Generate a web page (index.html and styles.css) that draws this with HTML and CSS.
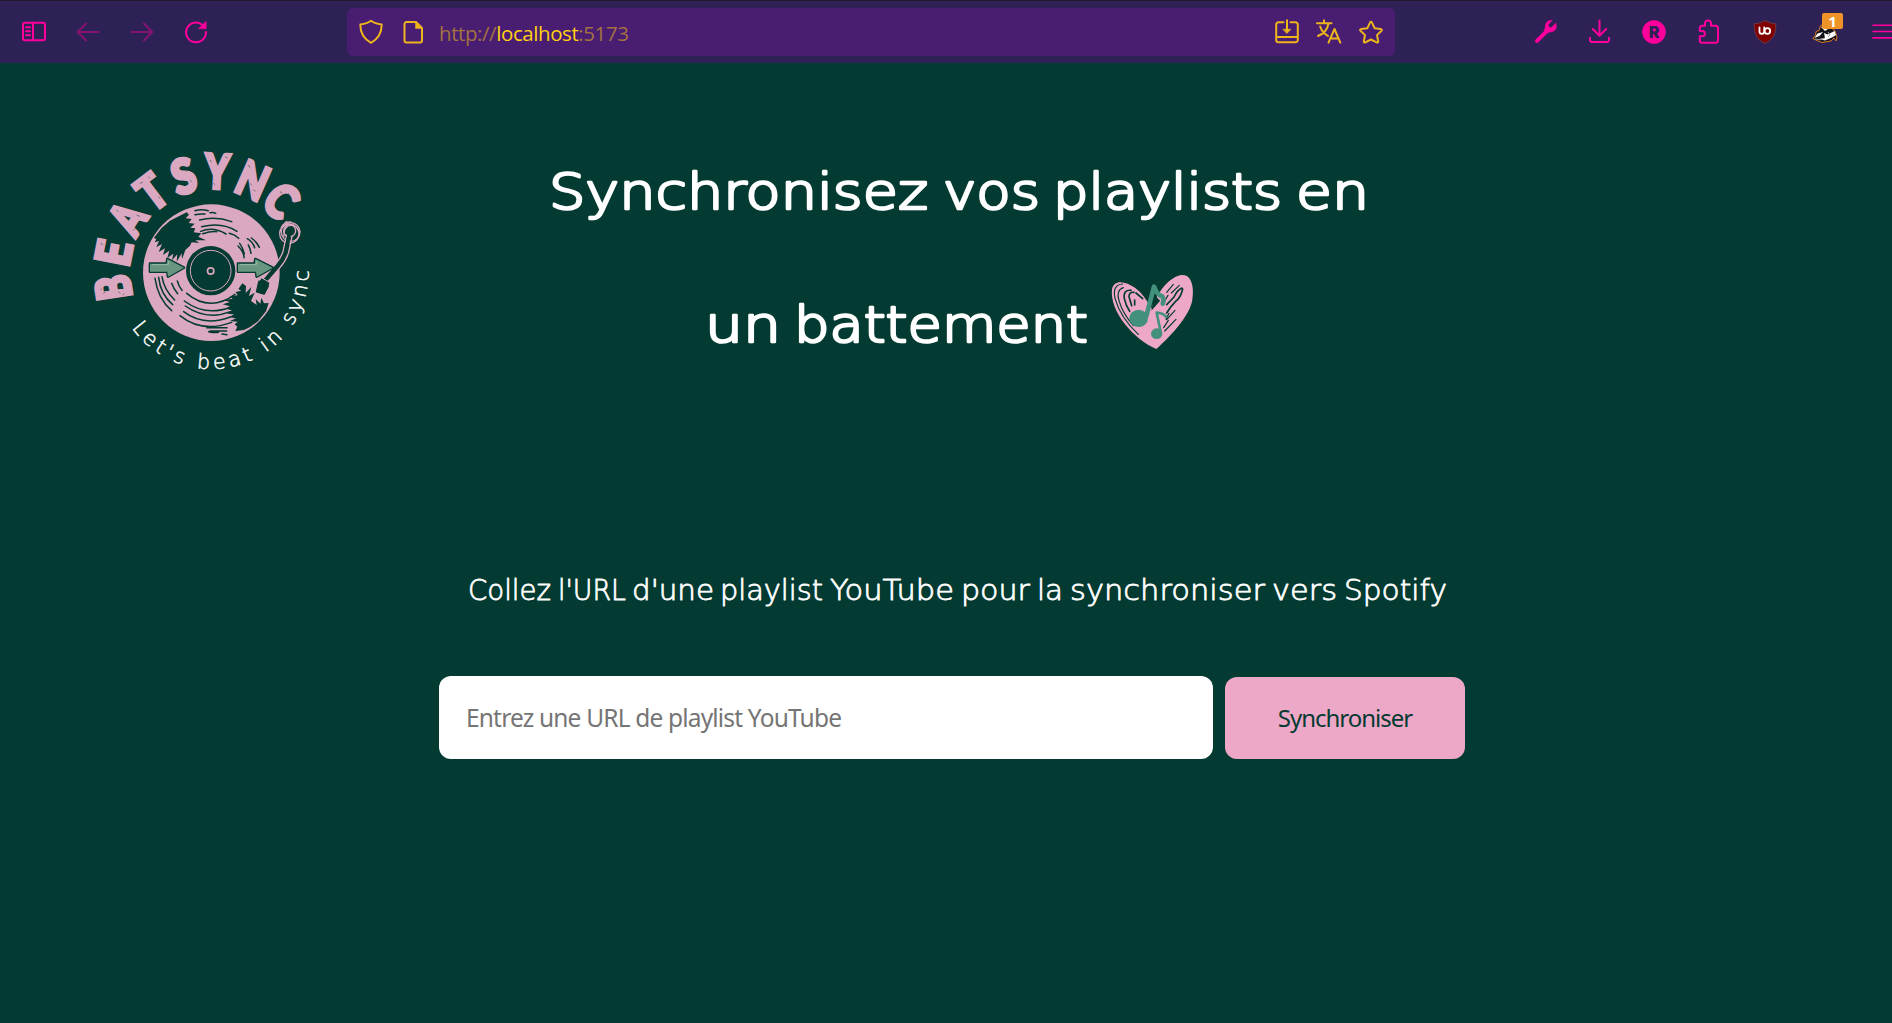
FILE: index.html
```html
<!DOCTYPE html>
<html lang="fr">
<head>
<meta charset="utf-8">
<title>BeatSync</title>
<link rel="stylesheet" href="styles.css">
</head>
<body>
<nav class="toolbar">
  <svg class="icon" viewBox="0 0 24 24"><rect x="1" y="1.800" width="22" height="17.400" rx="2"/><path d="M11 2v17M4 6.200h4M4 10.200h4M4 14.200h4"/></svg>
  <svg class="icon dim" viewBox="0 0 24 24"><path d="M22.500 11H2M10 2.500L1.800 11l8.200 8.500"/></svg>
  <svg class="icon dim" viewBox="0 0 24 24"><path d="M1.500 11H22M14 2.500l8.200 8.500-8.200 8.500"/></svg>
  <svg class="icon" viewBox="0 0 24 24"><path d="M18.500 3.900A9.900 9.900 0 1 0 21.900 11"/><path class="solid" d="M22.200.5v7.200h-7.600z"/></svg>
  <div class="urlbar">
    <svg class="icon" viewBox="0 0 24 24"><path d="M12 .8C9 3 5 4 1.300 4.600c0 8.500 3.700 14.500 10.700 18.200 7-3.700 10.700-9.700 10.700-18.200C19 4 15 3 12 .8z"/></svg>
    <svg class="icon" viewBox="0 0 24 24"><path d="M5.500 2h9.500l6 6v12.500a2 2 0 0 1-2 2H5.500a2 2 0 0 1-2-2V4a2 2 0 0 1 2-2z"/><path class="solid" d="M14.500 2v6.500H21z"/></svg>
    <span class="url">http://<b>localhost</b>:5173</span>
    <svg class="icon" viewBox="0 0 24 24"><path d="M8.500 2.300H3.500a2.300 2.300 0 0 0-2.300 2.300V20a2.300 2.300 0 0 0 2.300 2.300h17a2.300 2.300 0 0 0 2.300-2.300V4.600a2.300 2.300 0 0 0-2.300-2.300h-5M1.500 17h21M12 .3V11"/><path class="solid" d="M8 9.200h8L12 13.400z"/></svg>
    <svg class="icon" viewBox="0 0 24 24"><path d="M0 3.200h14.500M7 .2v3M11.500 3.500C10.500 9.500 6 14 1 16M3.200 6.500c1.200 4 4.300 7.500 7.800 9.500M11.500 22.700L17.500 9l5.800 13.700M13.500 18.500h8"/></svg>
    <svg class="icon" viewBox="0 0 24 24"><path d="M12 1.800c.5 0 .8.300 1 .8l2.600 5.600 6.200.8c1 .1 1.400 1.100.7 1.800L18 15.100l1.200 6.200c.2 1-.7 1.600-1.600 1.100L12 19.500l-5.600 2.900c-.9.500-1.800-.1-1.600-1.100L6 15.100 1.500 10.800c-.7-.7-.3-1.700.7-1.800l6.200-.8L11 2.600c.2-.5.500-.8 1-.8z"/></svg>
  </div>
  <div class="tools">
    <svg class="icon" viewBox="0 0 24 24"><path class="thick" d="M3 20.800L13.500 10.300"/><path class="solid" d="M21.800 3.300l-4.400 4.300-2.600-.5-.5-2.700 4-4C14.500-.3 11 2.500 11.300 7.500L10 11l2.300 2.500 3.400-1.500c5 .5 8-3.700 6.100-8.700z"/></svg>
    <svg class="icon" viewBox="0 0 24 24"><path d="M11.500.5v15M4.800 9l6.700 6.700L18.200 9M2 17.800v2a2.300 2.300 0 0 0 2.300 2.300h14.400a2.300 2.300 0 0 0 2.300-2.300v-2"/></svg>
    <svg class="icon" viewBox="0 0 24 24"><circle class="solid" cx="12" cy="12" r="11.600"/><text class="r-mark" x="12" y="17.800">R</text></svg>
    <svg class="icon" viewBox="0 0 24 24"><path d="M6 5.800h3V3.600a3 3 0 0 1 6 0v2.200h4.800A2.200 2.200 0 0 1 22 8v12.600a2.200 2.200 0 0 1-2.200 2.200H6a2.200 2.200 0 0 1-2.200-2.200v-4.300h2.500a2.600 2.600 0 0 0 0-5.200H3.800V8A2.200 2.200 0 0 1 6 5.800z"/></svg>
    <svg class="icon ublock" viewBox="0 0 24 24"><path class="shield" d="M12 .6C9 2.700 5 3.600 1.200 3.700 1 12.500 2.500 18.700 12 23.400c9.500-4.700 11-10.900 10.800-19.700C19 3.600 15 2.700 12 .6z"/><path class="uo" d="M6.500 7.500v4.300q0 2 2.200 2 2.500 0 2.500-2V7.500"/><circle class="uo" cx="14.400" cy="11" r="2.800"/></svg>
    <span class="badger">
      <svg viewBox="0 0 28 24"><path d="M.8 18.500l2.800-3.500L4 11.500l3-1 1.500-5L15 4l8 7 2 6-1 4-2-3-3 3-9 1.500-5-2z" fill="#15131a" stroke="#d97b22" stroke-width="1"/><path d="M9 7l4-2 3 4-3 2zM2.500 18l3-4.500 5.500-1.500-3.500 4zM12 13l3.500 1.500 7-3.500 1.500 4-3 2-8 3.500-6-1.500 6-1z" fill="#fff"/><path d="M3 19l6 .8 4-2M16 12l2 3-2 2" fill="none" stroke="#999"/></svg>
      <span class="badge">1</span>
    </span>
    <svg class="icon menu" viewBox="0 0 24 24"><path d="M0 5.200h24M0 11.500h24M0 17.900h24"/></svg>
  </div>
</nav>

<header class="hero">
  <svg class="logo" viewBox="0 0 720 720" role="img" aria-label="BeatSync">
    <g class="brand">
      <text transform="rotate(-99 396 396) translate(396 147) scale(.76 1)">B</text>
      <text transform="rotate(-79 396 396) translate(396 147) scale(.88 1)">E</text>
      <text transform="rotate(-57.500 396 396) translate(396 147) scale(.76 1)">A</text>
      <text transform="rotate(-37 396 396) translate(396 147) scale(.84 1)">T</text>
      <text transform="rotate(-16.500 396 396) translate(396 147) scale(.88 1)">S</text>
      <text transform="rotate(3 396 396) translate(396 145) scale(.78 1)">Y</text>
      <text transform="rotate(24 396 396) translate(396 147) scale(.8 1)">N</text>
      <text transform="rotate(44 396 396) translate(396 149) scale(.84 1)">C</text>
    </g>
    <g class="wear"><path d="M62 445l4 4M70 460l5-3M115 455l6 5M128 465l5-4M62 310l7 5M80 335l5 4M130 300l5 4M110 210l5 4M170 225l9 4M160 270l6-4M180 130l8-3M235 170l5 6M205 110l5 5M305 125l6 4M315 90l4 5M330 120l5 5M390 60l4 6M435 50l8 4M400 130l5 4M505 75l5 8M520 150l6 3M510 130l5 6M600 155l7 5M625 160l5 9M590 195l5-5"/></g>
    <path id="tag-arc" d="M155 563A292 292 0 0 0 685 372" fill="none"/>
    <text class="tagline" textLength="742"><textPath href="#tag-arc" textLength="742">Let's beat in sync</textPath></text>
    <circle class="vinyl" cx="394" cy="398" r="205"/>
    <path class="shadow" d="M320 217L270 242 244 265 222 293 229 298 224 307 237 303 229 322 246 312 236 336 255 325 249 345 268 332 262 354 280 341 276 361 292 343 290 365 305 340 306 358 316 330 330 317 335 307 358 309 346 301 378 301 355 290 364 280 341 277 346 265 331 263 344 251 326 249 335 237 317 235 327 224z"/>
    <path class="shadow" d="M487 430L475 447 484 452 467 456 473 466 450 469 458 476 430 481 450 486 428 493 450 499 437 506 455 511 442 521 462 523 447 532 468 535 450 543 473 545 464 553 472 560 466 573 492 570 510 561 534 544 558 514 566 489 552 490 544 473 541 491 527 477 530 495 513 483 524 458 507 468 514 441 497 459 498 438z"/>
    <path class="groove" d="M345 212q20-5 40 0M345 224q15-3 30-2M390 218q10-2 17 2M359 240q48-12 96 5M365 260q62-15 106 14M368 281q25-8 42-6M362 274q38-15 76 8M448 280q17 4 28 15M479 310q10 13 14 32M502 296q17 10 22 27M514 294q15 10 24 28M474 318q18 18 18 35M505 315q6 10 8 25M225 415q9 62 50 97M236 412q5 50 42 82M246 410q6 40 38 70M275 430q6 17 18 31M292 423q4 16 14 28M320 460q70 58 145 3M313 483q65 48 140 18M316 498q65 45 135 17M311 515q60 46 140 16M300 527q65 53 155 20M380 563h61M390 573h50M386 575q20 5 30 1M426 582l15 2"/>
    <circle cx="392" cy="392" r="74" fill="#033a31"/>
    <circle class="ring" cx="392" cy="392" r="61"/>
    <circle class="ring hub" cx="392" cy="393" r="9.500"/>
    <path class="arm-edge" d="M628 286L618 334Q611 358 593 378L548 430"/>
    <path class="arm" d="M628 286L618 334Q611 358 593 378L548 430"/>
    <path class="joint" d="M544 413l26 15-5 17-30-17z"/>
    <path class="head" d="M537 424l27 15-12 23-22-7z"/>
    <g class="pivot"><circle cx="628" cy="281" r="29"/><circle cx="632" cy="276" r="28"/><circle cx="629" cy="272" r="18"/><path d="M603 265q10-23 33-18M612 290q-2-35 24-34M650 263l10 12M611 253l10-9"/></g>
    <path d="M628 281L618 332" stroke="#033a31" stroke-width="11"/>
    <g class="arrows"><path d="M210 371h50l2-14 50 26-48 27-2-15h-52z"/><path d="M474 371h50l2-14 52 26-48 27-2-15h-54z"/></g>
    <path d="M216 374h49l2-11M480 374h49l2-11" fill="none" stroke="#9bb8a6" stroke-width="3"/>
  </svg>
  <h1 class="title">
    <svg class="line line-one" viewBox="0 0 860 100"><text y="58.500"><tspan x="19" textLength="379" lengthAdjust="spacingAndGlyphs">Synchronisez</tspan> <tspan x="413" textLength="97" lengthAdjust="spacingAndGlyphs">vos</tspan> <tspan x="523" textLength="229" lengthAdjust="spacingAndGlyphs">playlists</tspan> <tspan x="766" textLength="73" lengthAdjust="spacingAndGlyphs">en</tspan></text></svg>
    <span class="second">
      <svg class="line line-two" viewBox="0 0 550 110"><text y="91.500"><tspan x="175" textLength="76" lengthAdjust="spacingAndGlyphs">un</tspan> <tspan x="264" textLength="294" lengthAdjust="spacingAndGlyphs">battement</tspan></text></svg>
      <svg class="heart" viewBox="0 0 390 300">
        <path d="M229 267C163 240 88 155 96 88 101 57 137 63 166 84q27 20 48 62C230 105 260 56 300 46c36-7 43 38 37 73C330 166 275 225 229 267z" fill="#eea8c7"/>
        <g class="scratches"><path d="M128 72q-32 2-23 43 16 58 70 108M130 83q-23 7-12 42 10 35 42 72"/><path d="M153 91q-24-2-20 25 5 22 16 38M162 97q-15-2-15 13l8 27M164 120v15M168 99l20 17" stroke-width="5"/><path d="M306 84q-15 7-24 27-11 12-22 23M308 87q-5 25-22 38-15 16-26 34" stroke-width="5"/><path d="M280 73l-20 24M298 76l-24 23M264 106l-12 20M285 151l-25 28M267 160l-9 18M288 178l-34 35M265 181l-14 22"/><path d="M224 108L217 146 238 122z" fill="#033a31"/></g>
        <g class="notes"><ellipse cx="176" cy="175" rx="28" ry="26"/><path d="M199 168L222 80Q232 107 246 108 254 119 248 131" stroke-width="14"/><ellipse cx="230" cy="221" rx="17" ry="16"/><path d="M242 216L230 158Q250 159 259 171" stroke-width="8"/></g>
      </svg>
    </span>
  </h1>
</header>

<main class="sync">
  <p class="lead">
    <svg class="lead-line" viewBox="0 0 1050 60"><text y="40"><tspan x="38" textLength="83" lengthAdjust="spacingAndGlyphs">Collez</tspan> <tspan x="128" textLength="68" lengthAdjust="spacingAndGlyphs">l'URL</tspan> <tspan x="202" textLength="82" lengthAdjust="spacingAndGlyphs">d'une</tspan> <tspan x="290" textLength="103" lengthAdjust="spacingAndGlyphs">playlist</tspan> <tspan x="400" textLength="124" lengthAdjust="spacingAndGlyphs">YouTube</tspan> <tspan x="531" textLength="69" lengthAdjust="spacingAndGlyphs">pour</tspan> <tspan x="607" textLength="26" lengthAdjust="spacingAndGlyphs">la</tspan> <tspan x="640" textLength="195" lengthAdjust="spacingAndGlyphs">synchroniser</tspan> <tspan x="842" textLength="65" lengthAdjust="spacingAndGlyphs">vers</tspan> <tspan x="914" textLength="103" lengthAdjust="spacingAndGlyphs">Spotify</tspan></text></svg>
  </p>
  <form class="form">
    <input class="field" type="text" placeholder="Entrez une URL de playlist YouTube">
    <button class="submit" type="button">Synchroniser</button>
  </form>
</main>
</body>
</html>
```
FILE: styles.css
```css
* { box-sizing: border-box; }
body {
  margin: 0;
  height: 1023px;
  overflow: hidden;
  background: #033a31;
  font-family: "Noto Sans", sans-serif;
}
svg { display: block; flex: none; }

/* Browser toolbar */
.toolbar {
  display: flex;
  align-items: center;
  gap: 30px;
  height: 63px;
  padding-left: 22px;
  background: #2e2156;
  border-top: 1px solid #241930;
  color: #ff009d;
}
.icon {
  width: 24px;
  height: 24px;
  overflow: visible;
  fill: none;
  stroke: currentColor;
  stroke-width: 2;
  stroke-linecap: round;
  stroke-linejoin: round;
}
.toolbar > .icon { position: relative; top: 1px; }
.dim { opacity: .42; }
.icon .solid { fill: currentColor; stroke-width: .5; }
.icon .thick { stroke-width: 4; }
.urlbar {
  display: flex;
  align-items: center;
  gap: 18px;
  flex: none;
  width: 1048px;
  height: 48px;
  margin-left: 109px;
  padding: 0 12px;
  background: #491d72;
  border-radius: 6px;
  color: #edb51c;
}
.url {
  flex: 1;
  margin-left: -4px;
  padding-top: 2px;
  font-family: "Open Sans", sans-serif;
  font-size: 20.5px;
  letter-spacing: -.42px;
  color: #a3733f;
  white-space: nowrap;
}
.url b { font-weight: 400; color: #ffd012; }
.tools {
  display: flex;
  align-items: center;
  gap: 30px;
  flex: none;
  margin-left: 109px;
}
.r-mark {
  font: 900 16px Inter, sans-serif;
  text-anchor: middle;
  fill: #2e2156;
  stroke: none;
}
.ublock { margin-left: 3px; }
.icon .shield { fill: #800000; stroke: #6c3848; stroke-width: 1; }
.icon .uo { stroke: #fff; stroke-width: 1.8; }
.badger { position: relative; width: 28px; height: 24px; margin-left: 5px; }
.badger svg { width: 28px; height: 24px; }
.badge {
  position: absolute;
  left: 10px;
  top: -7px;
  width: 21px;
  height: 16px;
  border-radius: 2px;
  background: #ee9328;
  color: #fff;
  font: 700 15px/16px "Noto Sans", sans-serif;
  text-align: center;
}
.menu { margin-left: 3px; stroke-width: 1.6; }

/* Logo and heading */
.hero { display: flex; padding: 77px 0 0 80px; }
.logo { width: 240px; height: 240px; }
.brand {
  font: 900 142px Lato, sans-serif;
  fill: #dba8c1;
  stroke: #dba8c1;
  stroke-width: 11;
  text-anchor: middle;
}
.wear { stroke: #033a31; stroke-width: 2.5; opacity: .6; }
.tagline {
  font: 400 62px "DejaVu Sans", sans-serif;
  font-weight: 200;
  fill: #fff;
  stroke: #fff;
  stroke-width: 1.5;
}
.vinyl { fill: #dba8c1; }
.shadow { fill: #033a31; }
.groove { fill: none; stroke: #033a31; stroke-width: 4.5; stroke-linecap: round; }
.ring { fill: none; stroke: #dba8c1; stroke-width: 3; }
.hub { stroke-width: 5; }
.arm-edge { fill: none; stroke: #dba8c1; stroke-width: 21; }
.arm { fill: none; stroke: #033a31; stroke-width: 13; }
.joint { fill: #033a31; stroke: #dba8c1; stroke-width: 3; }
.head { fill: #033a31; stroke: #033a31; stroke-width: 5; stroke-linejoin: round; }
.pivot { fill: none; stroke: #dba8c1; stroke-width: 4; }
.arrows { fill: #689681; stroke: #033a31; stroke-width: 8; stroke-linejoin: round; paint-order: stroke; }
.title { margin: 10px 0 0 210px; font-weight: 400; }
.line text, .lead-line text {
  font-family: "DejaVu Sans", sans-serif;
  font-weight: 200;
  fill: #fff;
  stroke: #fff;
  stroke-linejoin: round;
}
.line text { font-size: 50px; stroke-width: 2.6; }
.line-one { width: 860px; height: 100px; }
.line-two { width: 550px; height: 110px; overflow: visible; }
.second { display: flex; align-items: flex-end; }
.heart { width: 130px; height: 100px; }
.scratches { fill: none; stroke: #033a31; stroke-width: 3.5; stroke-linecap: round; }
.notes ellipse { fill: #43907d; }
.notes path { fill: none; stroke: #43907d; stroke-linecap: round; stroke-linejoin: round; }

/* Playlist form */
.sync { padding-top: 180px; }
.lead { margin: 0 0 56px 430px; }
.lead-line { width: 1050px; height: 60px; }
.lead-line text { font-size: 28.5px; stroke-width: .8; }
.form { display: flex; align-items: flex-end; gap: 12px; margin-left: 439px; }
.field {
  width: 774px;
  height: 83px;
  padding: 0 27px;
  border: 0;
  border-radius: 12px;
  background: #fff;
  font: 24.5px "Noto Sans", sans-serif;
  letter-spacing: -.82px;
}
.field::placeholder { color: #757575; }
.submit {
  width: 240px;
  height: 82px;
  padding: 0 0 2px;
  border: 0;
  border-radius: 12px;
  background: #eea8c7;
  color: #033a31;
  font: 24px "Noto Sans", sans-serif;
  letter-spacing: -1px;
}
```
